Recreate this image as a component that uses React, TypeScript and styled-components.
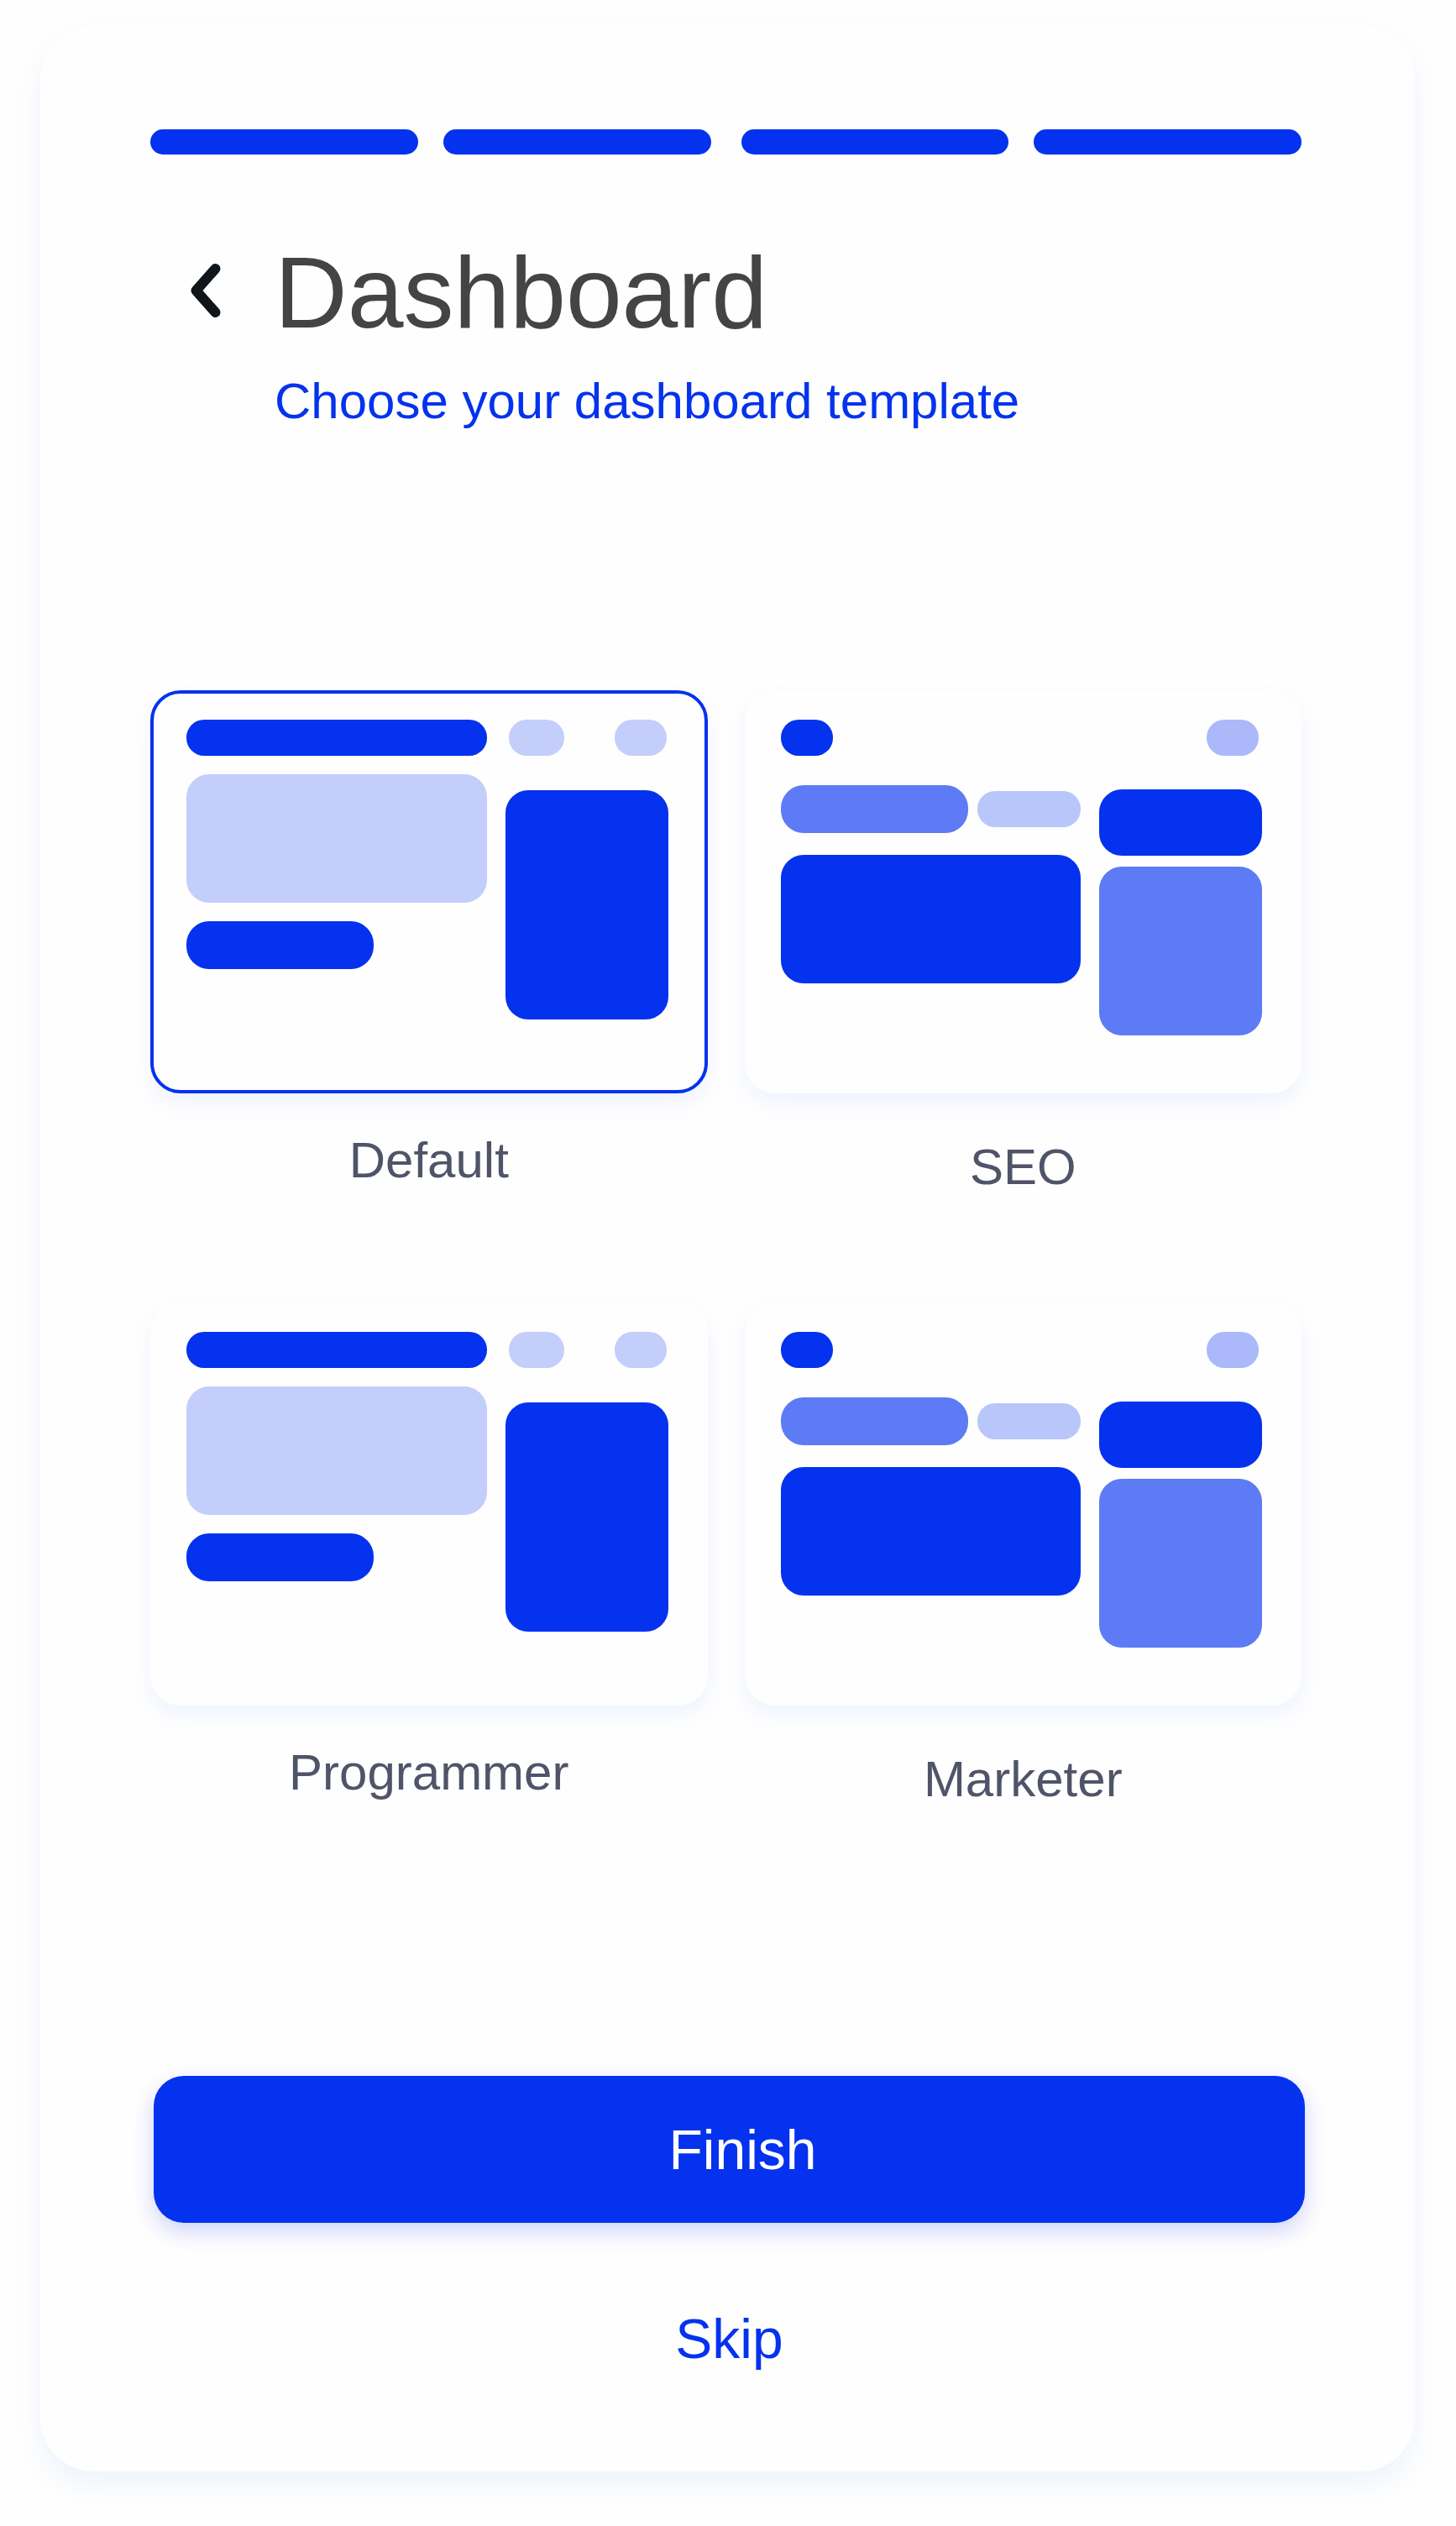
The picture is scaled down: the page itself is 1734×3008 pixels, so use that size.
import React, { useState } from "react";
import styled, { createGlobalStyle } from "styled-components";

const color = {
  page: "#fefefe",
  blue: "#0432ee",
  blueMid: "#5d7bf5",
  bluePale: "#abb9fb",
  blueSoft: "#b9c6fa",
  blueFaint: "#c4cefb",
  heading: "#444444",
  label: "#505468",
  icon: "#0f1519",
};

const GlobalStyle = createGlobalStyle`
  *, *::before, *::after { box-sizing: border-box; }
  body {
    margin: 0;
    background: ${color.page};
    font-family: "Liberation Sans", Arial, Helvetica, sans-serif;
  }
  button { font-family: inherit; border: 0; cursor: pointer; }
`;

const Page = styled.div`
  min-height: 100vh;
  padding: 31px 49px 64px 48px;
`;

const Panel = styled.main`
  display: flex;
  flex-direction: column;
  padding: 123px 131px 118px;
  border-radius: 64px;
  background: ${color.page};
  box-shadow: 0 16px 32px rgba(60, 120, 240, 0.08);
`;

const Progress = styled.div`
  display: grid;
  grid-template-columns: 1fr 1fr;
  gap: 36px;
  padding-right: 4px;
`;

const ProgressPair = styled.div`
  display: grid;
  grid-template-columns: 1fr 1fr;
  gap: 30px;
`;

const Step = styled.span`
  height: 30px;
  border-radius: 15px;
  background: ${color.blue};
`;

const Header = styled.header`
  display: flex;
  gap: 17px;
  margin-top: 104px;
`;

const BackButton = styled.button`
  display: flex;
  align-items: center;
  justify-content: center;
  width: 131px;
  height: 116px;
  padding: 0;
  background: transparent;
  color: ${color.icon};
`;

const Title = styled.h1`
  margin: 0;
  font-size: 120px;
  line-height: 120px;
  font-weight: 400;
  color: ${color.heading};
`;

const Subtitle = styled.p`
  margin: 34px 0 0;
  font-size: 60px;
  line-height: 72px;
  color: ${color.blue};
`;

const Templates = styled.div`
  display: grid;
  grid-template-columns: 1fr 1fr;
  gap: 125px 44px;
  margin-top: 308px;
  padding-right: 4px;
`;

const Option = styled.label<{ $gap: number }>`
  position: relative;
  display: flex;
  flex-direction: column;
  gap: ${(p) => p.$gap}px;
  cursor: pointer;
`;

const Radio = styled.input`
  position: absolute;
  opacity: 0;
`;

const Preview = styled.span<{ $selected: boolean }>`
  display: grid;
  grid-template-columns: 358fr 194fr;
  column-gap: 22px;
  align-items: start;
  height: 480px;
  padding: 31px 43px 0 39px;
  border: 4px solid ${(p) => (p.$selected ? color.blue : "transparent")};
  border-radius: 36px;
  background: ${color.page};
  box-shadow: 0 11px 24px rgba(60, 120, 250, 0.08);
`;

const Column = styled.span`
  display: flex;
  flex-direction: column;
`;

const Row = styled.span<{ $justify?: string; $inset?: string; $top?: number }>`
  display: flex;
  align-items: center;
  justify-content: ${(p) => p.$justify ?? "space-between"};
  padding: ${(p) => p.$inset ?? "0"};
  margin-top: ${(p) => p.$top ?? 0}px;
`;

const Block = styled.span<{
  $w?: number;
  $h: number;
  $tone: string;
  $top?: number;
}>`
  width: ${(p) => (p.$w ? `${p.$w}px` : "100%")};
  height: ${(p) => p.$h}px;
  margin-top: ${(p) => p.$top ?? 0}px;
  border-radius: ${(p) => (p.$h < 50 ? 21 : 27)}px;
  background: ${(p) => p.$tone};
`;

const OptionName = styled.span`
  font-size: 60px;
  line-height: 72px;
  text-align: center;
  color: ${color.label};
`;

const Actions = styled.div`
  display: flex;
  flex-direction: column;
  align-items: center;
  gap: 98px;
  margin-top: 317px;
  padding-left: 4px;
`;

const FinishButton = styled.button`
  width: 100%;
  height: 175px;
  padding: 0 0 0 32px;
  border-radius: 36px;
  background: ${color.blue};
  box-shadow: 0 10px 26px rgba(20, 40, 230, 0.2);
  font-size: 66px;
  line-height: 80px;
  color: #ffffff;
`;

const SkipButton = styled.button`
  padding: 0;
  background: transparent;
  font-size: 66px;
  line-height: 80px;
  color: ${color.blue};
`;

function ChevronLeft() {
  return (
    <svg width="36" height="64" viewBox="0 0 36 64" fill="none" aria-hidden="true">
      <path
        d="M29.5 6 L6.5 32 L29.5 58"
        stroke="currentColor"
        strokeWidth="12"
        strokeLinecap="round"
        strokeLinejoin="round"
      />
    </svg>
  );
}

function SidebarPreview() {
  return (
    <>
      <Column>
        <Block $h={43} $tone={color.blue} />
        <Block $h={153} $top={22} $tone={color.blueFaint} />
        <Block $w={223} $h={57} $top={22} $tone={color.blue} />
      </Column>
      <Column>
        <Row $inset="0 2px 0 4px">
          <Block $w={66} $h={43} $tone={color.blueFaint} />
          <Block $w={62} $h={43} $tone={color.blueFaint} />
        </Row>
        <Block $h={273} $top={41} $tone={color.blue} />
      </Column>
    </>
  );
}

function MetricsPreview() {
  return (
    <>
      <Column>
        <Block $w={62} $h={43} $tone={color.blue} />
        <Row $top={35}>
          <Block $w={223} $h={57} $tone={color.blueMid} />
          <Block $w={123} $h={43} $tone={color.blueSoft} />
        </Row>
        <Block $h={153} $top={26} $tone={color.blue} />
      </Column>
      <Column>
        <Row $justify="flex-end" $inset="0 4px 0 0">
          <Block $w={62} $h={43} $tone={color.bluePale} />
        </Row>
        <Block $h={79} $top={40} $tone={color.blue} />
        <Block $h={201} $top={13} $tone={color.blueMid} />
      </Column>
    </>
  );
}

const templates = [
  { name: "Default", Art: SidebarPreview, gap: 44 },
  { name: "SEO", Art: MetricsPreview, gap: 52 },
  { name: "Programmer", Art: SidebarPreview, gap: 44 },
  { name: "Marketer", Art: MetricsPreview, gap: 52 },
];

export default function App() {
  const [selected, setSelected] = useState("Default");

  return (
    <>
      <GlobalStyle />
      <Page>
        <Panel>
          <Progress role="img" aria-label="Step 4 of 4">
            <ProgressPair>
              <Step />
              <Step />
            </ProgressPair>
            <ProgressPair>
              <Step />
              <Step />
            </ProgressPair>
          </Progress>

          <Header>
            <BackButton type="button" aria-label="Back">
              <ChevronLeft />
            </BackButton>
            <div>
              <Title>Dashboard</Title>
              <Subtitle>Choose your dashboard template</Subtitle>
            </div>
          </Header>

          <Templates role="radiogroup" aria-label="Dashboard template">
            {templates.map(({ name, Art, gap }) => (
              <Option key={name} $gap={gap}>
                <Radio
                  type="radio"
                  name="template"
                  value={name}
                  checked={selected === name}
                  onChange={() => setSelected(name)}
                />
                <Preview $selected={selected === name}>
                  <Art />
                </Preview>
                <OptionName>{name}</OptionName>
              </Option>
            ))}
          </Templates>

          <Actions>
            <FinishButton type="button">Finish</FinishButton>
            <SkipButton type="button">Skip</SkipButton>
          </Actions>
        </Panel>
      </Page>
    </>
  );
}
